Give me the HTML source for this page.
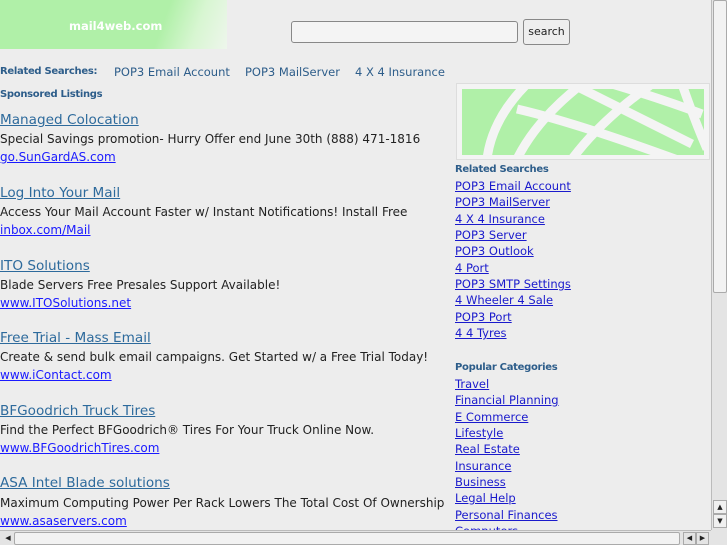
<!DOCTYPE html>
<html><head><meta charset="utf-8"><style>
*{margin:0;padding:0;box-sizing:border-box}
body{width:727px;height:545px;overflow:hidden;background:#ededed;font-family:"DejaVu Sans","Liberation Sans",sans-serif;position:relative;color:#222}
.abs{position:absolute;white-space:nowrap}
.hdr{left:0;top:0;width:227px;height:49px;background:linear-gradient(110deg,#b0f0a8 70%,#d8f6d2 85%,#eef6ec 100%)}
.logo{left:69px;top:19px;color:#fff;font-weight:bold;font-size:11.5px}
.inp{left:291px;top:21px;width:227px;height:22px;border:1px solid #888;border-radius:3px;background:#f4f4f4}
.btn{left:523px;top:19px;width:47px;height:26px;border:1px solid #888;border-radius:3px;background:#eee;font-size:11px;text-align:center;line-height:24px}
.rs{top:65px;font-size:11.5px;color:#2d5d8a}
.b{font-weight:bold;font-size:10px;color:#2d5d8a;letter-spacing:-0.3px}
.t{font-size:13.6px;color:#2d6a9c;text-decoration:underline;left:0}
.d{font-size:12px;left:0;color:#222}
.u{font-size:12px;left:0;color:#1a1aff;text-decoration:underline}
.r{left:455px;font-size:11.5px;color:#1a1acc;text-decoration:underline}
.vs{left:711px;top:0;width:16px;height:530px;background:#e4e4e4;border-left:1px solid #bbb}
.hs{left:0;top:530px;width:711px;height:15px;background:#e4e4e4;border-top:1px solid #bbb}
</style></head><body>
<div class="abs hdr"></div><div class="abs logo">mail4web.com</div>
<div class="abs inp"></div><div class="abs btn">search</div>
<div class="abs rs b" style="left:0;top:66px">Related Searches:</div>
<div class="abs rs" style="left:114px">POP3 Email Account</div>
<div class="abs rs" style="left:245px">POP3 MailServer</div>
<div class="abs rs" style="left:355px">4 X 4 Insurance</div>
<div class="abs b" style="left:0;top:89px">Sponsored Listings</div>

<div class="abs t" style="top:112px">Managed Colocation</div>
<div class="abs d" style="top:132px">Special Savings promotion- Hurry Offer end June 30th (888) 471-1816</div>
<div class="abs u" style="top:150px">go.SunGardAS.com</div>
<div class="abs t" style="top:185px">Log Into Your Mail</div>
<div class="abs d" style="top:205px">Access Your Mail Account Faster w/ Instant Notifications! Install Free</div>
<div class="abs u" style="top:223px">inbox.com/Mail</div>
<div class="abs t" style="top:258px">ITO Solutions</div>
<div class="abs d" style="top:278px">Blade Servers Free Presales Support Available!</div>
<div class="abs u" style="top:296px">www.ITOSolutions.net</div>
<div class="abs t" style="top:330px">Free Trial - Mass Email</div>
<div class="abs d" style="top:350px">Create &amp; send bulk email campaigns. Get Started w/ a Free Trial Today!</div>
<div class="abs u" style="top:368px">www.iContact.com</div>
<div class="abs t" style="top:403px">BFGoodrich Truck Tires</div>
<div class="abs d" style="top:423px">Find the Perfect BFGoodrich® Tires For Your Truck Online Now.</div>
<div class="abs u" style="top:441px">www.BFGoodrichTires.com</div>
<div class="abs t" style="top:475px">ASA Intel Blade solutions</div>
<div class="abs d" style="top:496px">Maximum Computing Power Per Rack Lowers The Total Cost Of Ownership</div>
<div class="abs u" style="top:514px">www.asaservers.com</div>

<div class="abs" style="left:456px;top:83px;width:254px;height:77px;border:1px solid #ddd;background:#f4f4f4"></div>
<svg class="abs" style="left:462px;top:89px" width="242" height="66" viewBox="0 0 242 66">
<rect width="242" height="66" fill="#b0f0a8"/>
<g stroke="#f4f4f4" stroke-width="9" fill="none">
<path d="M65 -5 Q30 30 25 70"/><path d="M120 -5 Q75 30 55 70"/><path d="M190 -5 Q140 30 110 70"/>
<path d="M55 20 Q120 35 240 80"/><path d="M110 -5 Q160 20 230 55"/><path d="M150 -5 Q200 10 240 25"/>
<path d="M220 -5 Q232 30 245 60"/></g></svg>
<div class="abs b" style="left:455px;top:164px">Related Searches</div>
<div class="abs r" style="top:179px">POP3 Email Account</div>
<div class="abs r" style="top:195px">POP3 MailServer</div>
<div class="abs r" style="top:212px">4 X 4 Insurance</div>
<div class="abs r" style="top:228px">POP3 Server</div>
<div class="abs r" style="top:244px">POP3 Outlook</div>
<div class="abs r" style="top:261px">4 Port</div>
<div class="abs r" style="top:277px">POP3 SMTP Settings</div>
<div class="abs r" style="top:293px">4 Wheeler 4 Sale</div>
<div class="abs r" style="top:310px">POP3 Port</div>
<div class="abs r" style="top:326px">4 4 Tyres</div>
<div class="abs b" style="left:455px;top:362px">Popular Categories</div>
<div class="abs r" style="top:377px">Travel</div>
<div class="abs r" style="top:393px">Financial Planning</div>
<div class="abs r" style="top:410px">E Commerce</div>
<div class="abs r" style="top:426px">Lifestyle</div>
<div class="abs r" style="top:442px">Real Estate</div>
<div class="abs r" style="top:459px">Insurance</div>
<div class="abs r" style="top:475px">Business</div>
<div class="abs r" style="top:491px">Legal Help</div>
<div class="abs r" style="top:508px">Personal Finances</div>
<div class="abs r" style="top:524px">Computers</div>

<div class="abs vs"><div style="position:absolute;left:1px;top:0;width:14px;height:293px;background:#f2f2f2;border:1px solid #aaa;border-radius:2px"></div>
<div style="position:absolute;left:1px;top:500px;width:14px;height:14px;border:1px solid #aaa;background:#f0f0f0;font-size:7px;text-align:center;line-height:12px">▲</div>
<div style="position:absolute;left:1px;top:514px;width:14px;height:14px;border:1px solid #aaa;background:#f0f0f0;font-size:7px;text-align:center;line-height:12px">▼</div></div>
<div class="abs hs"><div style="position:absolute;left:2px;top:1px;width:12px;height:13px;font-size:7px;line-height:13px;text-align:center">◀</div>
<div style="position:absolute;left:14px;top:1px;width:666px;height:13px;background:#f2f2f2;border:1px solid #aaa;border-radius:2px"></div>
<div style="position:absolute;left:683px;top:1px;width:13px;height:13px;border:1px solid #aaa;font-size:7px;line-height:11px;text-align:center">◀</div>
<div style="position:absolute;left:696px;top:1px;width:13px;height:13px;border:1px solid #aaa;font-size:7px;line-height:11px;text-align:center">▶</div></div>
<div class="abs" style="left:711px;top:530px;width:16px;height:15px;background:#e4e4e4"></div>
</body></html>
